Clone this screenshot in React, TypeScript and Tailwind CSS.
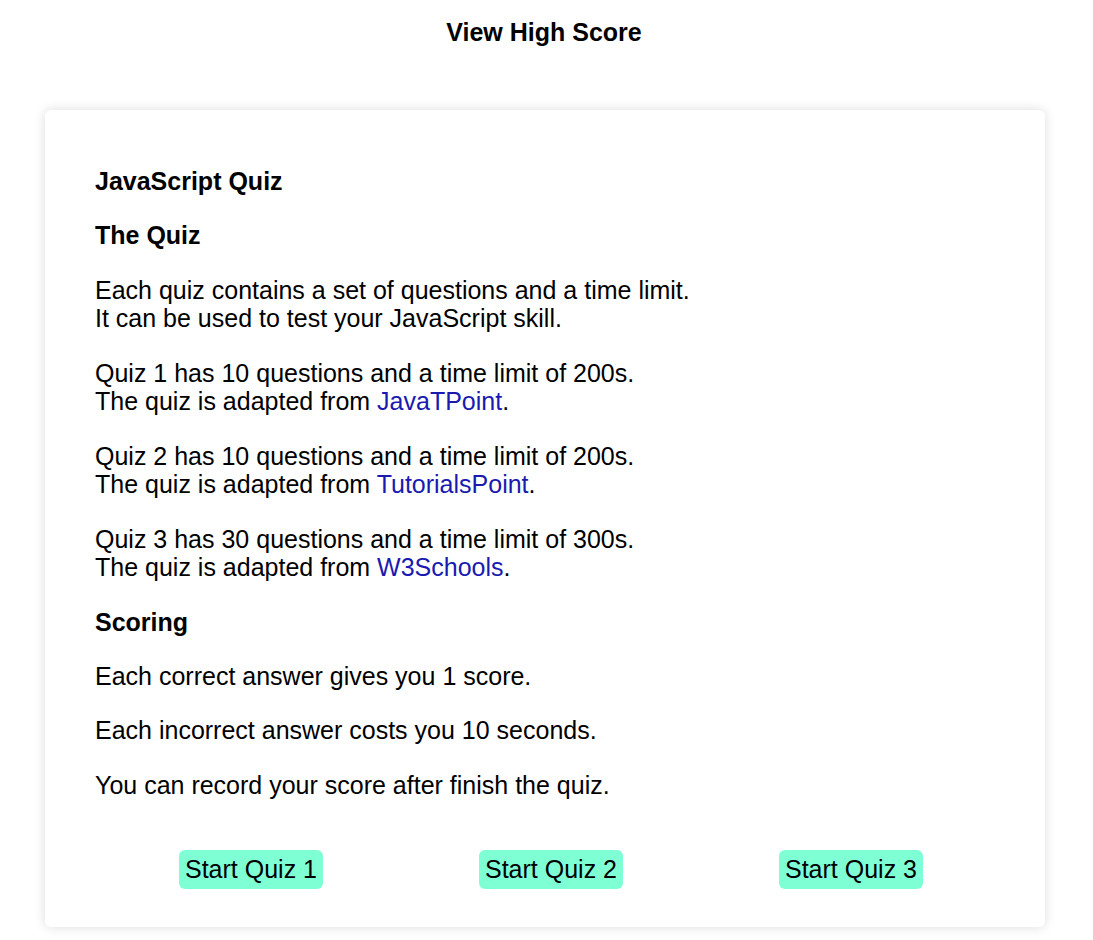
import React from 'react';

const quizzes = [
  { n: 1, count: 10, time: 200, source: 'JavaTPoint' },
  { n: 2, count: 10, time: 200, source: 'TutorialsPoint' },
  { n: 3, count: 30, time: 300, source: 'W3Schools' },
];

export default function App() {
  return (
    <div className="min-h-screen bg-white text-black text-[25px] leading-[1.15]" style={{ fontFamily: '"Liberation Sans", Arial, sans-serif' }}>
      {/* Header */}
      <div className="pt-[17.6px] pr-[5px] text-center">
        <a className="font-bold cursor-pointer">View High Score</a>
      </div>

      {/* Card */}
      <div className="mt-[63.6px] w-[1000px] ml-[45px] bg-white rounded-md shadow-[0_0_12px_rgba(0,0,0,0.14)] pt-[57px] pb-[38px]">
        <div className="pl-[50px] pr-[50px] flex flex-col gap-[25.55px]">
          <h1 className="font-bold">JavaScript Quiz</h1>
          <h2 className="font-bold">The Quiz</h2>
          <p>
            Each quiz contains a set of questions and a time limit.
            <br />
            It can be used to test your JavaScript skill.
          </p>
          {quizzes.map(q => (
            <p key={q.n}>
              Quiz {q.n} has {q.count} questions and a time limit of {q.time}s.
              <br />
              The quiz is adapted from <a className="text-[#1a1ab0] cursor-pointer">{q.source}</a>.
            </p>
          ))}
          <h2 className="font-bold">Scoring</h2>
          <p>Each correct answer gives you 1 score.</p>
          <p>Each incorrect answer costs you 10 seconds.</p>
          <p>You can record your score after finish the quiz.</p>
        </div>

        {/* Buttons */}
        <div className="mt-[50.6px] ml-[56px] w-[900px] grid grid-cols-3 justify-items-center">
          {quizzes.map(q => (
            <button key={q.n} className="bg-[#7fffd4] rounded-md px-[6px] py-[5px] leading-[1.15]">
              Start Quiz {q.n}
            </button>
          ))}
        </div>
      </div>
    </div>
  );
}
